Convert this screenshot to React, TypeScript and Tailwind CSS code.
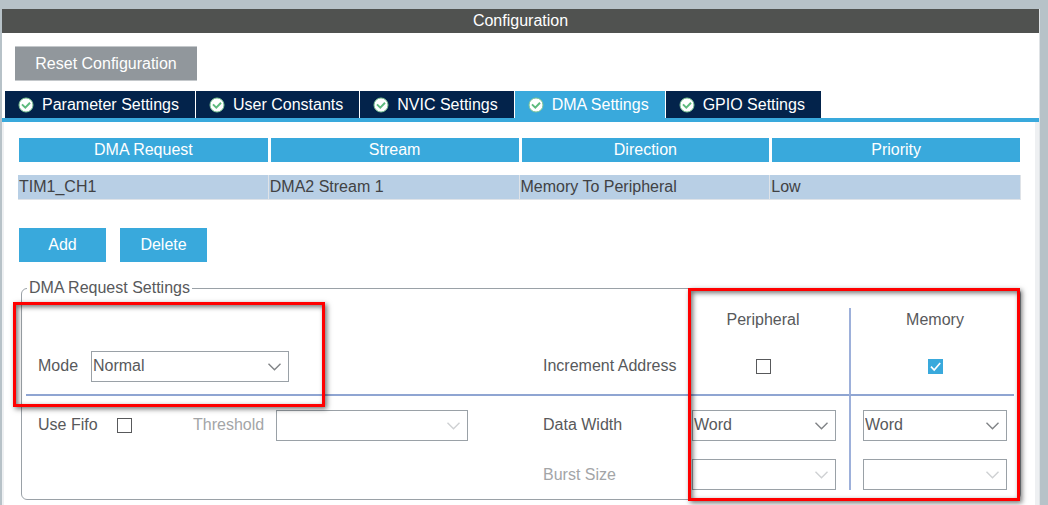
import type { ReactNode } from "react";
import clsx from "clsx";

const tabs = [
  { name: "Parameter Settings", active: false },
  { name: "User Constants", active: false },
  { name: "NVIC Settings", active: false },
  { name: "DMA Settings", active: true },
  { name: "GPIO Settings", active: false },
];

const columns = ["DMA Request", "Stream", "Direction", "Priority"];
const rows = [["TIM1_CH1", "DMA2 Stream 1", "Memory To Peripheral", "Low"]];

function CheckBadge() {
  return (
    <svg className="h-4 w-4 shrink-0" viewBox="0 0 16 16" fill="none">
      <circle cx="8" cy="8" r="7" fill="#fff" stroke="#7cc594" strokeWidth="1" />
      <path d="M4 7.4L7.3 10.6L12 5.8" stroke="#5dbb7d" strokeWidth="2" />
    </svg>
  );
}

function Select({
  id,
  label,
  options = [""],
  disabled = false,
  className,
}: {
  id: string;
  label?: string;
  options?: string[];
  disabled?: boolean;
  className: string;
}) {
  return (
    <div className={clsx("relative h-[31px]", className)}>
      <select
        id={id}
        aria-label={label}
        disabled={disabled}
        className="block h-full w-full appearance-none border border-[#9aa1a7] bg-white pl-px text-[#58595b] opacity-100"
      >
        {options.map((option) => (
          <option key={option}>{option}</option>
        ))}
      </select>
      <svg
        className={clsx(
          "pointer-events-none absolute top-3 right-2 h-2 w-[13px]",
          disabled ? "text-[#cfd1d3]" : "text-[#808386]"
        )}
        viewBox="0 0 13 8"
        fill="none"
      >
        <path d="M0.5 0.8L6.5 6.8L12.5 0.8" stroke="currentColor" strokeWidth="1.4" />
      </svg>
    </div>
  );
}

function Checkbox({ id, label, checked = false }: { id: string; label?: string; checked?: boolean }) {
  return (
    <span className="relative block h-[15px] w-[15px]">
      <input
        id={id}
        type="checkbox"
        aria-label={label}
        defaultChecked={checked}
        className="peer block h-[15px] w-[15px] appearance-none border border-[#58595b] bg-white checked:border-[#39a9dc] checked:bg-[#39a9dc]"
      />
      <svg
        className="pointer-events-none absolute inset-0 hidden h-[15px] w-[15px] peer-checked:block"
        viewBox="0 0 15 15"
        fill="none"
      >
        <path d="M3 7.6L6.2 11L12.2 4" stroke="#fff" strokeWidth="1.7" />
      </svg>
    </span>
  );
}

function Cell({ className, children }: { className: string; children?: ReactNode }) {
  return <div className={clsx("flex", className)}>{children}</div>;
}

const headRow = "h-6 items-center";
const modeRow = "h-16 items-center border-b-2 border-b-[#8fa5d2] pt-[6px]";
const fifoRow = "h-[58px] items-center";
const burstRow = "h-9 items-end";
const memory = "border-l-2 border-l-[#9db0da]";

export default function App() {
  return (
    <div className="flex min-h-screen flex-col bg-[#b7c2c8] pt-[9px] pr-2 pl-[2px] font-['Liberation_Sans',Arial,sans-serif] text-base leading-6 text-[#58595b]">
      <main className="flex grow flex-col border-r border-[#dfe3e6] bg-white">
        <h1 className="bg-[#505250] text-center text-white">Configuration</h1>

        <div className="px-[13px] pt-[13px] pb-[10px]">
          <button className="h-[35px] w-[182px] border-y border-[#c4c8cb] bg-[#91979c] text-white">
            Reset Configuration
          </button>
        </div>

        {/* Tabs */}
        <div role="tablist" className="flex gap-px border-b-4 border-[#39a9dc] pl-[3px]">
          {tabs.map((tab) => (
            <button
              key={tab.name}
              role="tab"
              aria-selected={tab.active}
              className={clsx(
                "flex h-[27px] items-center gap-2 pr-4 pl-[13px] whitespace-nowrap text-white",
                tab.active ? "bg-[#39a9dc]" : "bg-[#03234b]"
              )}
            >
              <CheckBadge />
              {tab.name}
            </button>
          ))}
        </div>

        <div className="grow border-r-4 border-l-2 border-[#eef0f2] pr-[14px] pl-[14px]">
          {/* Request list */}
          <table className="mt-4 w-full table-fixed border-separate border-spacing-0">
            <thead>
              <tr>
                {columns.map((column) => (
                  <th
                    key={column}
                    className="h-[37px] border-r border-b-[13px] border-l-2 border-white bg-[#39a9dc] p-0 font-normal text-white first:border-l"
                  >
                    {column}
                  </th>
                ))}
              </tr>
            </thead>
            <tbody>
              {rows.map((row) => (
                <tr key={row[0]}>
                  {row.map((value) => (
                    <td
                      key={value}
                      className="h-[25px] border-r border-b border-[#dfe3e8] bg-[#b8cfe5] p-0 pl-px text-[#414244]"
                    >
                      {value}
                    </td>
                  ))}
                </tr>
              ))}
            </tbody>
          </table>

          <div className="mt-7 flex gap-[14px] pl-px text-white">
            <button className="h-[34px] w-[87px] bg-[#39a9dc]">Add</button>
            <button className="h-[34px] w-[87px] bg-[#39a9dc]">Delete</button>
          </div>

          {/* Request settings */}
          <div className="relative mt-[14px] pl-[3px]">
            <fieldset className="min-w-0 rounded-md border border-[#9aa1a7] pr-[6px] pb-[9px] pl-1">
              <legend className="ml-px px-[2px]">DMA Request Settings</legend>
              <div className="grid grid-cols-[1fr_149px_157px_165px] pt-2">
                <Cell className={headRow} />
                <Cell className={headRow} />
                <Cell className={clsx(headRow, "justify-center pr-[15px]")}>Peripheral</Cell>
                <Cell className={clsx(headRow, memory, "justify-center pl-[5px]")}>Memory</Cell>

                <Cell className={clsx(modeRow, "pl-3")}>
                  <label htmlFor="mode" className="w-[53px]">
                    Mode
                  </label>
                  <Select id="mode" options={["Normal", "Circular"]} className="w-[198px]" />
                </Cell>
                <Cell className={modeRow}>Increment Address</Cell>
                <Cell className={clsx(modeRow, "justify-center pr-[15px]")}>
                  <Checkbox id="inc-peripheral" label="Increment peripheral address" />
                </Cell>
                <Cell className={clsx(modeRow, memory, "justify-center pl-[5px]")}>
                  <Checkbox id="inc-memory" label="Increment memory address" checked />
                </Cell>

                <Cell className={clsx(fifoRow, "pl-3")}>
                  <label htmlFor="fifo" className="w-[79px]">
                    Use Fifo
                  </label>
                  <Checkbox id="fifo" />
                  <label htmlFor="threshold" className="ml-[61px] w-[83px] text-[#a3a5a7]">
                    Threshold
                  </label>
                  <Select id="threshold" disabled className="w-48" />
                </Cell>
                <Cell className={fifoRow}>Data Width</Cell>
                <Cell className={fifoRow}>
                  <Select
                    id="width-peripheral"
                    label="Peripheral data width"
                    options={["Word", "Half Word", "Byte"]}
                    className="w-36"
                  />
                </Cell>
                <Cell className={clsx(fifoRow, memory, "pl-3")}>
                  <Select
                    id="width-memory"
                    label="Memory data width"
                    options={["Word", "Half Word", "Byte"]}
                    className="w-36"
                  />
                </Cell>

                <Cell className={burstRow} />
                <Cell className={clsx(burstRow, "pb-[3px] text-[#a3a5a7]")}>Burst Size</Cell>
                <Cell className={burstRow}>
                  <Select id="burst-peripheral" label="Peripheral burst size" disabled className="w-36" />
                </Cell>
                <Cell className={clsx(burstRow, memory, "pl-3")}>
                  <Select id="burst-memory" label="Memory burst size" disabled className="w-36" />
                </Cell>
              </div>
            </fieldset>

            {/* Highlights */}
            <div className="pointer-events-none absolute top-[26px] -left-[5px] h-[105px] w-[312px] border-[3px] border-[#f00] shadow-[2px_2px_5px_rgba(0,0,0,0.55),inset_2px_2px_5px_rgba(0,0,0,0.55)]" />
            <div className="pointer-events-none absolute top-3 right-px h-[213px] w-[332px] border-[3px] border-[#f00] shadow-[2px_2px_5px_rgba(0,0,0,0.55),inset_2px_2px_5px_rgba(0,0,0,0.55)]" />
          </div>
        </div>
      </main>
    </div>
  );
}
